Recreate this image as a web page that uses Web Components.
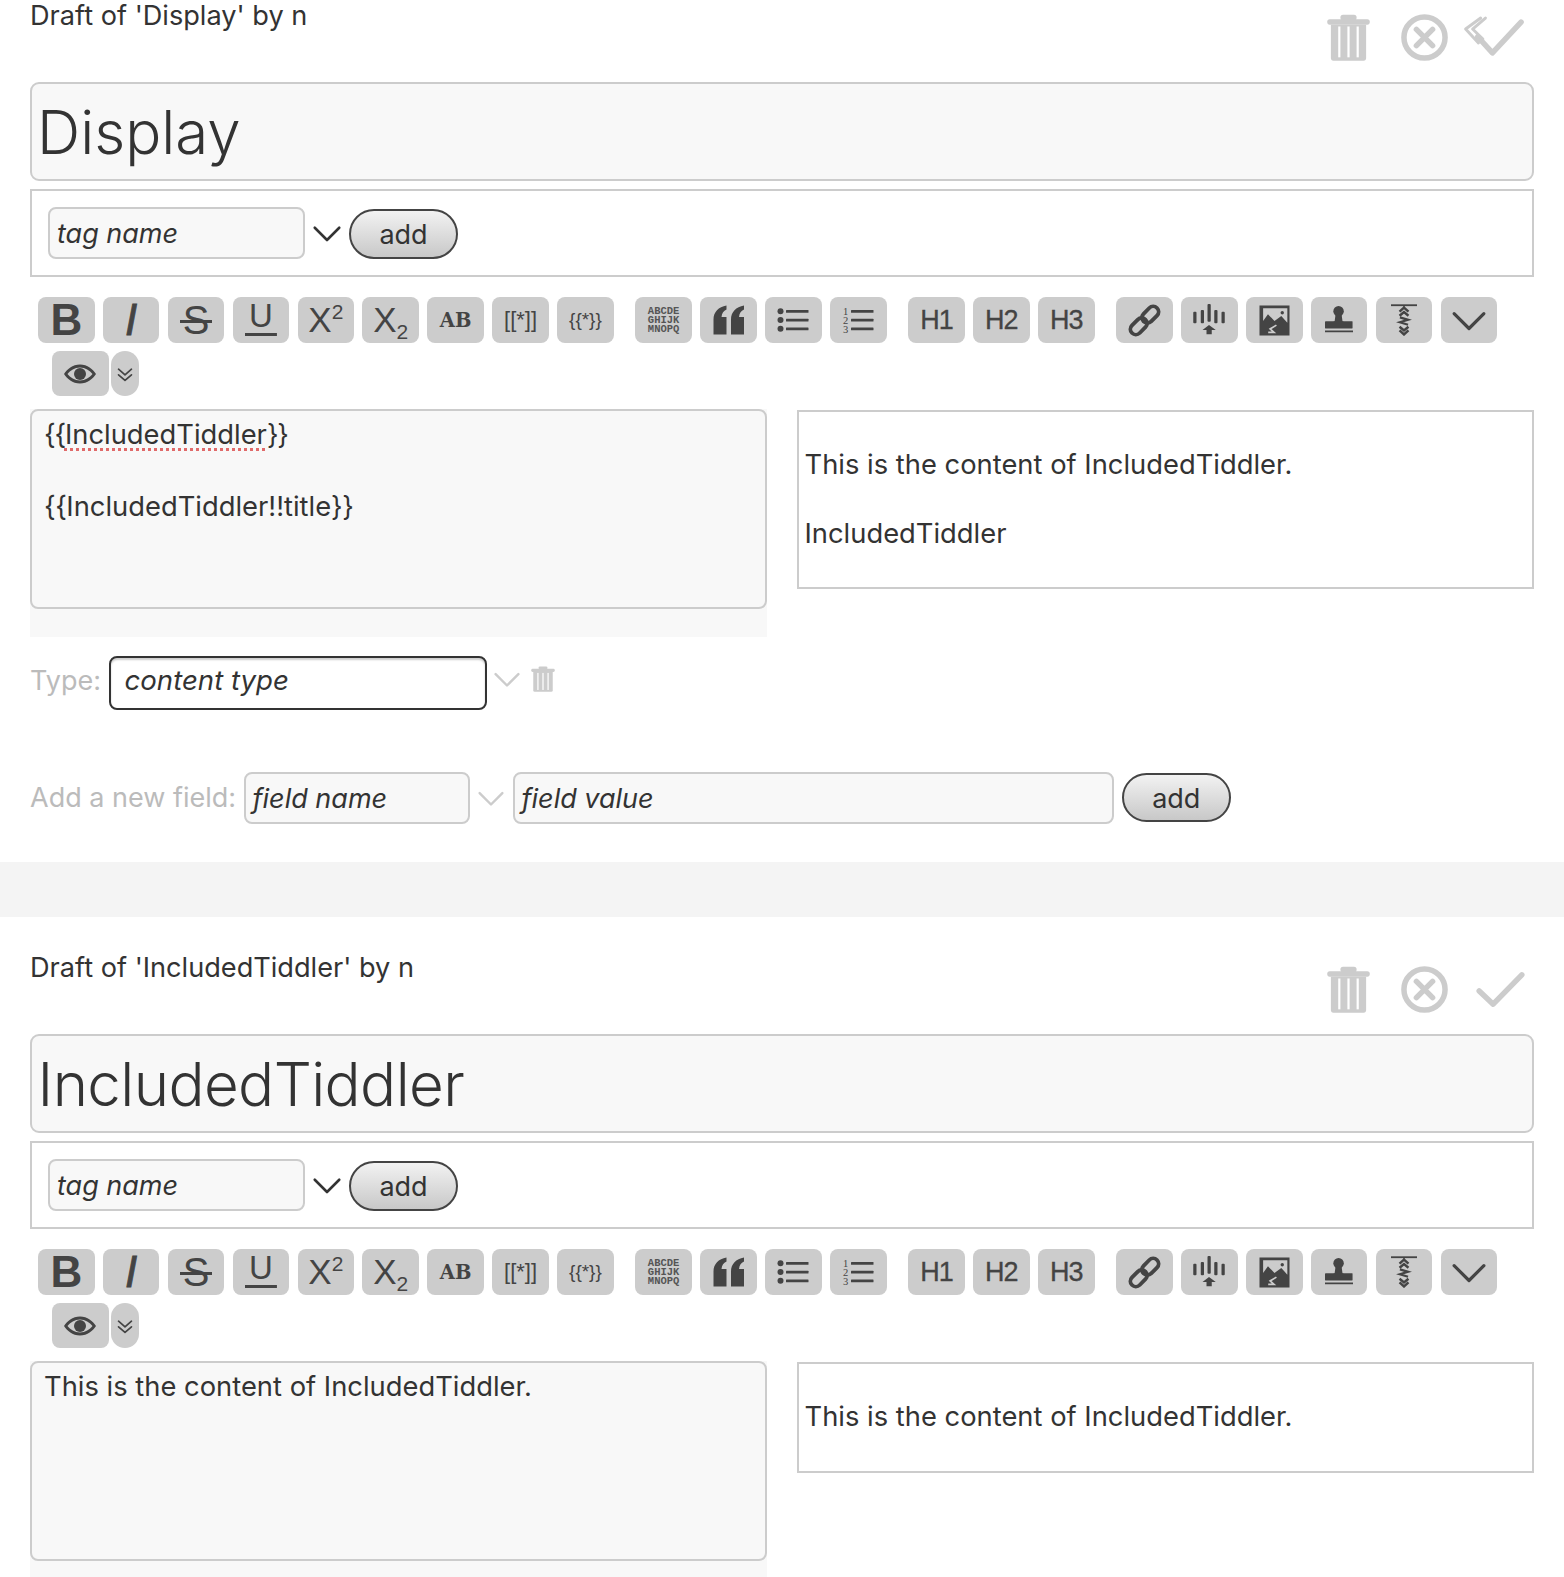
<!DOCTYPE html>
<html><head><meta charset="utf-8">
<style>
html,body{margin:0;padding:0;height:1577px;overflow:hidden;background:#fff}
body{font-family:Inter,"Noto Sans",sans-serif;color:#333}
</style></head>
<body>
<x-editor draft="Draft of 'Display' by n" name="Display" dirty first>
  <div slot="source"><span style="letter-spacing:-1.2px">{{</span><span style="text-decoration:underline dotted #e06a6a 2.5px;text-underline-offset:4px">IncludedTiddler</span><span style="letter-spacing:-1.2px">}}</span><br><br><span style="letter-spacing:-.5px">{{</span>IncludedTiddler!!title<span style="letter-spacing:-.5px">}}</span></div>
  <x-para slot="preview">This is the content of IncludedTiddler.</x-para>
  <x-para slot="preview">IncludedTiddler</x-para>
</x-editor>
<x-band></x-band>
<x-editor draft="Draft of 'IncludedTiddler' by n" name="IncludedTiddler" last>
  <div slot="source">This is the content of IncludedTiddler.</div>
  <x-para slot="preview">This is the content of IncludedTiddler.</x-para>
</x-editor>

<script>
const ICONS = {
  trash:`<g fill="currentColor"><rect x="6" y="14" width="116" height="15" rx="7"/><rect x="42" y="2" width="44" height="15" rx="7"/><path d="M16 29h96v91a7 7 0 0 1-7 7H23a7 7 0 0 1-7-7z"/></g><g fill="#fff"><rect x="36" y="34" width="6" height="84"/><rect x="61" y="34" width="6" height="84"/><rect x="86" y="34" width="6" height="84"/></g>`,
  cancel:`<g fill="none" stroke="currentColor" stroke-width="15" stroke-linecap="round"><circle cx="64" cy="64" r="56"/><path d="M42 42l44 44M86 42l-44 44"/></g>`,
  done:`<path d="M6 68l38 36 78-80" fill="none" stroke="currentColor" stroke-width="15" stroke-linecap="round" stroke-linejoin="round"/>`,
  dirtydone:`<path d="M2 62l40 44 78-84" fill="none" stroke="currentColor" stroke-width="15" stroke-linecap="round" stroke-linejoin="round"/><path d="M10 11L-31 41 4 79M23 11L-12 41 16 68" fill="none" stroke="currentColor" stroke-width="8" stroke-linecap="round" stroke-linejoin="round"/>`,
  chevron:`<path d="M8 40l56 56 56-56" fill="none" stroke="currentColor" stroke-width="12" stroke-linecap="round" stroke-linejoin="round"/>`,
  quote:`<g fill="currentColor"><path d="M2 122V62C2 32 22 12 54 6v16C42 28 36 36 34 52h20v70z"/><path d="M72 122V62c0-30 20-50 52-56v16C112 28 106 36 104 52h20v70z"/></g>`,
  ul:`<g fill="currentColor"><circle cx="14" cy="29" r="12"/><circle cx="14" cy="64" r="12"/><circle cx="14" cy="99" r="12"/><rect x="36" y="24" width="90" height="11" rx="2"/><rect x="36" y="59" width="90" height="11" rx="2"/><rect x="36" y="94" width="90" height="11" rx="2"/></g>`,
  link:`<g fill="none" stroke="currentColor" stroke-width="17" transform="rotate(-45 64 64)"><rect x="-14" y="40" width="84" height="48" rx="24"/><rect x="58" y="40" width="84" height="48" rx="24"/></g>`,
  excise:`<g fill="currentColor"><rect x="58" y="0" width="13" height="71" rx="4"/><rect x="1" y="31" width="13" height="46" rx="4"/><rect x="31" y="24" width="13" height="53" rx="4"/><rect x="85" y="24" width="13" height="53" rx="4"/><rect x="114" y="31" width="13" height="46" rx="4"/><path d="M64 84l27 20H75v17H54v-17H38z"/></g>`,
  picture:`<path fill="currentColor" d="M2 2h124v124H2z"/><path fill="#ccc" d="M17 13h100v60L92 45 64 66 37 38 17 66z"/><circle cx="96" cy="32" r="7" fill="currentColor"/><path d="M38 113h24L46 99l26-16" fill="none" stroke="#ccc" stroke-width="7"/>`,
  stamp:`<g fill="currentColor"><circle cx="62" cy="24" r="24"/><path d="M48 40h28l4 30 10 4H34l10-4z"/><rect x="0" y="70" width="126" height="33" rx="2"/><rect x="0" y="112" width="128" height="8"/></g>`,
  eye:`<path fill="currentColor" fill-rule="evenodd" d="M64 26c30 0 52 20 64 38-12 18-34 38-64 38S12 82 0 64c12-18 34-38 64-38zm0 12c-21 0-39 12-50 26 11 14 29 26 50 26s39-12 50-26c-11-14-29-26-50-26z"/><circle cx="64" cy="64" r="24" fill="currentColor"/>`,
  dbl:`<path d="M18 30l46 40 46-40M18 70l46 40 46-40" fill="none" stroke="currentColor" stroke-width="12" stroke-linecap="round" stroke-linejoin="round"/>`
};
const svg = (n,s,extra='')=>`<svg viewBox="0 0 128 128" width="${s}" height="${s}" style="display:block;overflow:visible;${extra}">${ICONS[n]}</svg>`;

class XIcon extends HTMLElement{
  connectedCallback(){
    if(this.shadowRoot) return;
    const s=this.getAttribute('size')||28;
    this.attachShadow({mode:'open'}).innerHTML=`<style>:host{display:block;color:${this.getAttribute('color')||'inherit'};flex:none}</style>${svg(this.getAttribute('name'),s)}`;
  }
}
customElements.define('x-icon',XIcon);

class XPara extends HTMLElement{
  constructor(){super();this.attachShadow({mode:'open'}).innerHTML=`<style>:host{display:block;margin:36.5px 0;line-height:32px;font-size:27.35px}</style><slot></slot>`;}
}
customElements.define('x-para',XPara);

class XBand extends HTMLElement{
  constructor(){super();this.attachShadow({mode:'open'}).innerHTML=`<style>:host{display:block;height:55px;background:#f4f4f4}</style>`;}
}
customElements.define('x-band',XBand);

class XTool extends HTMLElement{
  constructor(){super();this.attachShadow({mode:'open'}).innerHTML=`<style>
    :host{display:flex;align-items:center;justify-content:center;flex:none;box-sizing:border-box;width:56.6px;height:46px;margin-right:8.3px;background:#ccc;border-radius:8px;color:#444;font-family:"Liberation Sans",sans-serif;line-height:1}
    :host([narrow]){width:28px;border-radius:14px;margin-left:-6.3px}
  </style><slot></slot>`;}
}
customElements.define('x-tool',XTool);

class XToolbar extends HTMLElement{
  constructor(){super();this.attachShadow({mode:'open'}).innerHTML=`<style>
    :host{display:block;margin-top:20px}
    .row{display:flex;padding-left:8px}
    .row2{padding-left:22px;margin-top:8px}
    .row2 x-tool{height:45px}
    .sep{width:13.3px;flex:none}
    .h{font:27px 'Liberation Sans';letter-spacing:-1px;-webkit-text-stroke:.3px #444}
  </style>
  <div class="row">
    <x-tool><span style="font:bold 44px/1 'Liberation Sans'">B</span></x-tool>
    <x-tool><span style="font:italic 44px/1 'Liberation Sans';-webkit-text-stroke:.8px #444">I</span></x-tool>
    <x-tool><span style="display:inline-block;font:40px/1 'Liberation Sans';padding:0 3px;background:linear-gradient(#444,#444) center 54%/100% 3px no-repeat">S</span></x-tool>
    <x-tool><span style="display:inline-block;font:33px/.9 'Liberation Sans';padding:0 4px 5px;margin-bottom:3px;background:linear-gradient(#444,#444) center bottom/100% 3px no-repeat">U</span></x-tool>
    <x-tool><span style="font:35px 'Liberation Sans'">X<sup style="font-size:21px;vertical-align:13px;line-height:0">2</sup></span></x-tool>
    <x-tool><span style="font:35px 'Liberation Sans'">X<sub style="font-size:21px;vertical-align:-7px;line-height:0">2</sub></span></x-tool>
    <x-tool><span style="font:bold 19.5px 'DejaVu Serif'">AB</span></x-tool>
    <x-tool><span style="font:22px 'Liberation Sans'">[[*]]</span></x-tool>
    <x-tool><span style="font:19px 'Liberation Sans'">{{*}}</span></x-tool>
    <div class="sep"></div>
    <x-tool><span style="font:bold 10.5px/9px 'Liberation Mono';text-align:center;color:#555">ABCDE<br>GHIJK<br>MNOPQ</span></x-tool>
    <x-tool>${svg('quote',32)}</x-tool>
    <x-tool>${svg('ul',32)}</x-tool>
    <x-tool><span style="display:flex;align-items:center;gap:3px"><span style="font:10.5px/9px 'Liberation Serif';text-align:center">1<br>2<br>3</span><svg viewBox="0 0 90 128" width="22.5" height="32" style="display:block"><g fill="currentColor"><rect y="24" width="90" height="11" rx="2"/><rect y="59" width="90" height="11" rx="2"/><rect y="94" width="90" height="11" rx="2"/></g></svg></span></x-tool>
    <div class="sep"></div>
    <x-tool><span class="h">H1</span></x-tool>
    <x-tool><span class="h">H2</span></x-tool>
    <x-tool><span class="h">H3</span></x-tool>
    <div class="sep"></div>
    <x-tool>${svg('link',29)}</x-tool>
    <x-tool>${svg('excise',32)}</x-tool>
    <x-tool>${svg('picture',31)}</x-tool>
    <x-tool>${svg('stamp',28)}</x-tool>
    <x-tool><svg viewBox="0 0 128 160" width="26" height="32.5" style="display:block"><g fill="none" stroke="currentColor"><path d="M0 6h128" stroke-width="9"/><path d="M64 6v12" stroke-width="7"/><path d="M42 38l22-20 22 20M42 58l22-18 22 18" stroke-width="12"/><path d="M44 66l40 12-40 12 40 12" stroke-width="11"/><path d="M42 112l22 18 22-18M42 130l22 20 22-20" stroke-width="12"/></g></svg></x-tool>
    <x-tool>${svg('chevron',34)}</x-tool>
  </div>
  <div class="row row2">
    <x-tool>${svg('eye',32)}</x-tool>
    <x-tool narrow>${svg('dbl',18)}</x-tool>
  </div>`;}
}
customElements.define('x-toolbar',XToolbar);

class XField extends HTMLElement{
  constructor(){super();this.attachShadow({mode:'open'}).innerHTML=`<style>
    :host{display:flex;align-items:center;box-sizing:border-box;height:52px;padding:2px 0 0 7px;border:2px solid #ccc;border-radius:8px;background:#f8f8f8;font-style:italic;font-size:27px;color:#333;flex:none}
    :host([focus]){height:54px;padding:0 0 5px 14px;border-color:#333;background:#fff;box-shadow:inset 0 2px 2px rgba(0,0,0,.2);font-size:27.6px}
  </style><slot></slot>`;}
}
customElements.define('x-field',XField);

class XAdd extends HTMLElement{
  constructor(){super();this.attachShadow({mode:'open'}).innerHTML=`<style>
    :host{display:flex;align-items:center;justify-content:center;box-sizing:border-box;width:109px;height:49.5px;padding-top:2px;border:2px solid #444;border-radius:25px;background:linear-gradient(#f2f2f2,#c8c8c8);font-size:27px;color:#333;flex:none}
  </style>add`;}
}
customElements.define('x-add',XAdd);

class XEditor extends HTMLElement{
  constructor(){
    super();
    const draft=this.getAttribute('draft'),name=this.getAttribute('name');
    const first=this.hasAttribute('first'),dirty=this.hasAttribute('dirty'),last=this.hasAttribute('last');
    this.attachShadow({mode:'open'}).innerHTML=`<style>
    :host{display:block;box-sizing:border-box;${last?'height:663px;overflow:hidden;':''}padding:${first?0:35.5}px 30.5px ${last?0:38}px 30px;font-size:27.35px;line-height:36px;color:#333}
    header{display:flex;justify-content:space-between;align-items:flex-start;height:81.5px}
    .draft{line-height:32px;font-size:27.15px}
    .btns{display:flex;gap:29px;color:#ccc;margin-top:14px;margin-right:9.5px}
    .title{box-sizing:border-box;height:99.5px;padding-left:${first?5:5.5}px;border:2px solid #ccc;border-radius:9px;background:#f8f8f8;font-size:60px;font-weight:300;line-height:97px;letter-spacing:${first?0:-.6}px}
    .tags{box-sizing:border-box;height:88px;margin-top:8px;padding:0 0 0 16px;border:2px solid #ccc;display:flex;align-items:center;background:#fff}
    .cols{display:grid;grid-template-columns:1fr 1fr;column-gap:30.5px;margin-top:12.5px;align-items:start}
    .left{background:#f8f8f8;padding-bottom:${last?40:28}px}
    .src{box-sizing:border-box;height:200px;padding:6px 12px;border:2px solid #ccc;border-radius:8px;background:#f8f8f8;line-height:36px}
    .prev{box-sizing:border-box;margin-top:1px;padding:1px 5.5px;border:2px solid #ccc}
    .prev>div{display:flow-root}
    .row{display:flex;align-items:center}
    .label{color:#bbb;font-size:27px}
    .type{margin-top:19px}
    .type .label{padding-bottom:3px}
    .add{margin-top:62px}
    </style>
    <header><div class="draft">${draft}</div>
      <div class="btns"><x-icon name="trash" size="47"></x-icon><x-icon name="cancel" size="47"></x-icon><x-icon name="${dirty?'dirtydone':'done'}" size="47"></x-icon></div>
    </header>
    <div class="title">${name}</div>
    <div class="tags">
      <x-field style="width:257px">tag name</x-field>
      <x-icon name="chevron" size="28" color="#333" style="margin:0 8px 0 8px"></x-icon>
      <x-add style="margin-top:2px"></x-add>
    </div>
    <x-toolbar></x-toolbar>
    <div class="cols">
      <div class="left"><div class="src"><slot name="source"></slot></div></div>
      <div class="prev"><div><slot name="preview"></slot></div></div>
    </div>
    ${last?'':`<div class="row type">
      <span class="label" style="width:78.5px">Type:</span>
      <x-field focus style="width:378px">content type</x-field>
      <x-icon name="chevron" size="26" color="#ccc" style="margin:0 0 8px 7px"></x-icon>
      <x-icon name="trash" size="26" color="#ccc" style="margin:0 0 7px 10px"></x-icon>
    </div>
    <div class="row add">
      <span class="label" style="width:213.5px">Add a new field:</span>
      <x-field style="width:226px">field name</x-field>
      <x-icon name="chevron" size="26" color="#ccc" style="margin-left:8.5px;margin-right:8.5px"></x-icon>
      <x-field style="width:601px">field value</x-field>
      <x-add style="margin-left:8.5px;width:108.5px"></x-add>
    </div>`}`;
  }
}
customElements.define('x-editor',XEditor);
</script>
</body></html>
